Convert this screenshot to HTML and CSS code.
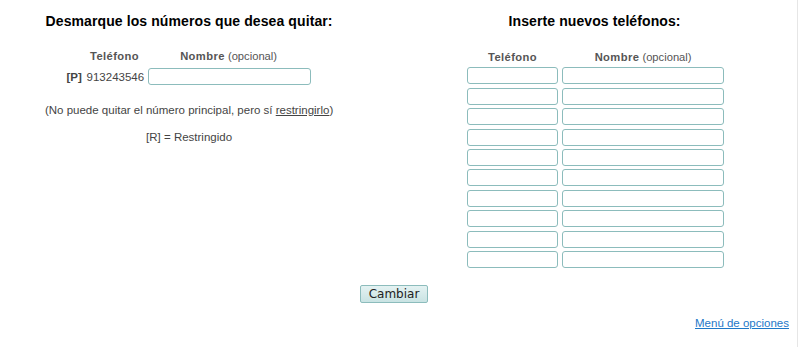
FILE: index.html
```html
<!DOCTYPE html>
<html lang="es">
<head>
<meta charset="utf-8">
<title>Teléfonos</title>
<link rel="stylesheet" href="styles.css">
</head>
<body>
<div class="page">
  <div class="cols">
    <section class="col col-left">
      <h2 class="title">Desmarque los números que desea quitar:</h2>
      <div class="grid-left">
        <span></span>
        <span class="th"><b>Teléfono</b></span>
        <span class="th"><b>Nombre</b> (opcional)</span>
        <span class="tag">[P]</span>
        <span class="num">913243546</span>
        <input class="field f-name-l" type="text">
      </div>
      <p class="note">(No puede quitar el número principal, pero sí <a class="ul" href="#">restringirlo</a>)</p>
      <p class="note legend">[R] = Restringido</p>
    </section>
    <section class="col col-right">
      <h2 class="title">Inserte nuevos teléfonos:</h2>
      <div class="grid-right">
        <span class="th"><b>Teléfono</b></span>
        <span class="th"><b>Nombre</b> (opcional)</span>
        <input class="field" type="text"><input class="field" type="text">
        <input class="field" type="text"><input class="field" type="text">
        <input class="field" type="text"><input class="field" type="text">
        <input class="field" type="text"><input class="field" type="text">
        <input class="field" type="text"><input class="field" type="text">
        <input class="field" type="text"><input class="field" type="text">
        <input class="field" type="text"><input class="field" type="text">
        <input class="field" type="text"><input class="field" type="text">
        <input class="field" type="text"><input class="field" type="text">
        <input class="field" type="text"><input class="field" type="text">
      </div>
    </section>
  </div>
  <div class="actions">
    <button class="btn" type="button">Cambiar</button>
  </div>
  <div class="footer">
    <a class="menu" href="#">Menú de opciones</a>
  </div>
</div>
</body>
</html>
```
FILE: styles.css
```css
html, body {
  margin: 0;
  padding: 0;
  background: #fff;
}
body {
  font-family: "Liberation Sans", Arial, sans-serif;
  font-size: 11.5px;
  color: #444;
}
.page {
  width: 798px;
  height: 347px;
  border-right: 1px solid #e6e6e6;
  box-sizing: border-box;
  padding-top: 13px;
}
.cols {
  display: flex;
}
.col {
  text-align: center;
}
.col-left {
  width: 383px;
}
.col-right {
  width: 410px;
  padding-left: 14px;
}
.title {
  margin: 0;
  font-size: 14px;
  line-height: 17px;
  font-weight: bold;
  color: #000;
  letter-spacing: 0.1px;
}
.th {
  color: #555;
  line-height: 14px;
  font-size: 11.2px;
}
.th b {
  font-weight: bold;
  letter-spacing: 0.4px;
}
.grid-left {
  display: grid;
  grid-template-columns: 17px 56px 164px;
  column-gap: 4px;
  row-gap: 5px;
  justify-content: center;
  align-items: center;
  margin-top: 19px;
  margin-left: -2px;
}
.tag {
  font-weight: bold;
  color: #444;
}
.num {
  color: #444;
  text-align: right;
  white-space: nowrap;
}
.field {
  box-sizing: border-box;
  height: 17px;
  margin: 0;
  padding: 1px 3px;
  border: 1px solid #8cbcbc;
  border-radius: 3px;
  background: #fff;
  font: 11px "Liberation Sans", Arial, sans-serif;
}
.f-name-l {
  width: 163px;
  margin-left: 1px;
}
.note {
  margin: 18px 0 0;
  line-height: 14px;
  color: #444;
}
.legend {
  margin-top: 13px;
}
.ul {
  color: #444;
  text-decoration: underline;
}
.grid-right {
  display: grid;
  grid-template-columns: 91px 162px;
  column-gap: 4px;
  row-gap: 3.4px;
  justify-content: center;
  margin-top: 20px;
  margin-left: 2px;
}
.grid-right .field {
  width: 100%;
}
.actions {
  text-align: center;
  margin-top: 17px;
  padding-right: 9px;
}
.btn {
  font-family: "DejaVu Sans", sans-serif;
  font-size: 12px;
  color: #222;
  height: 18px;
  width: 68px;
  padding: 0;
  border: 1px solid #8cbcbc;
  border-radius: 2px;
  background: linear-gradient(#e4f2f2, #c9e3e3);
}
.footer {
  text-align: right;
  padding-right: 8px;
  margin-top: 14px;
}
.menu {
  color: #1e78c8;
  font-size: 11.5px;
  text-decoration: underline;
}
```
